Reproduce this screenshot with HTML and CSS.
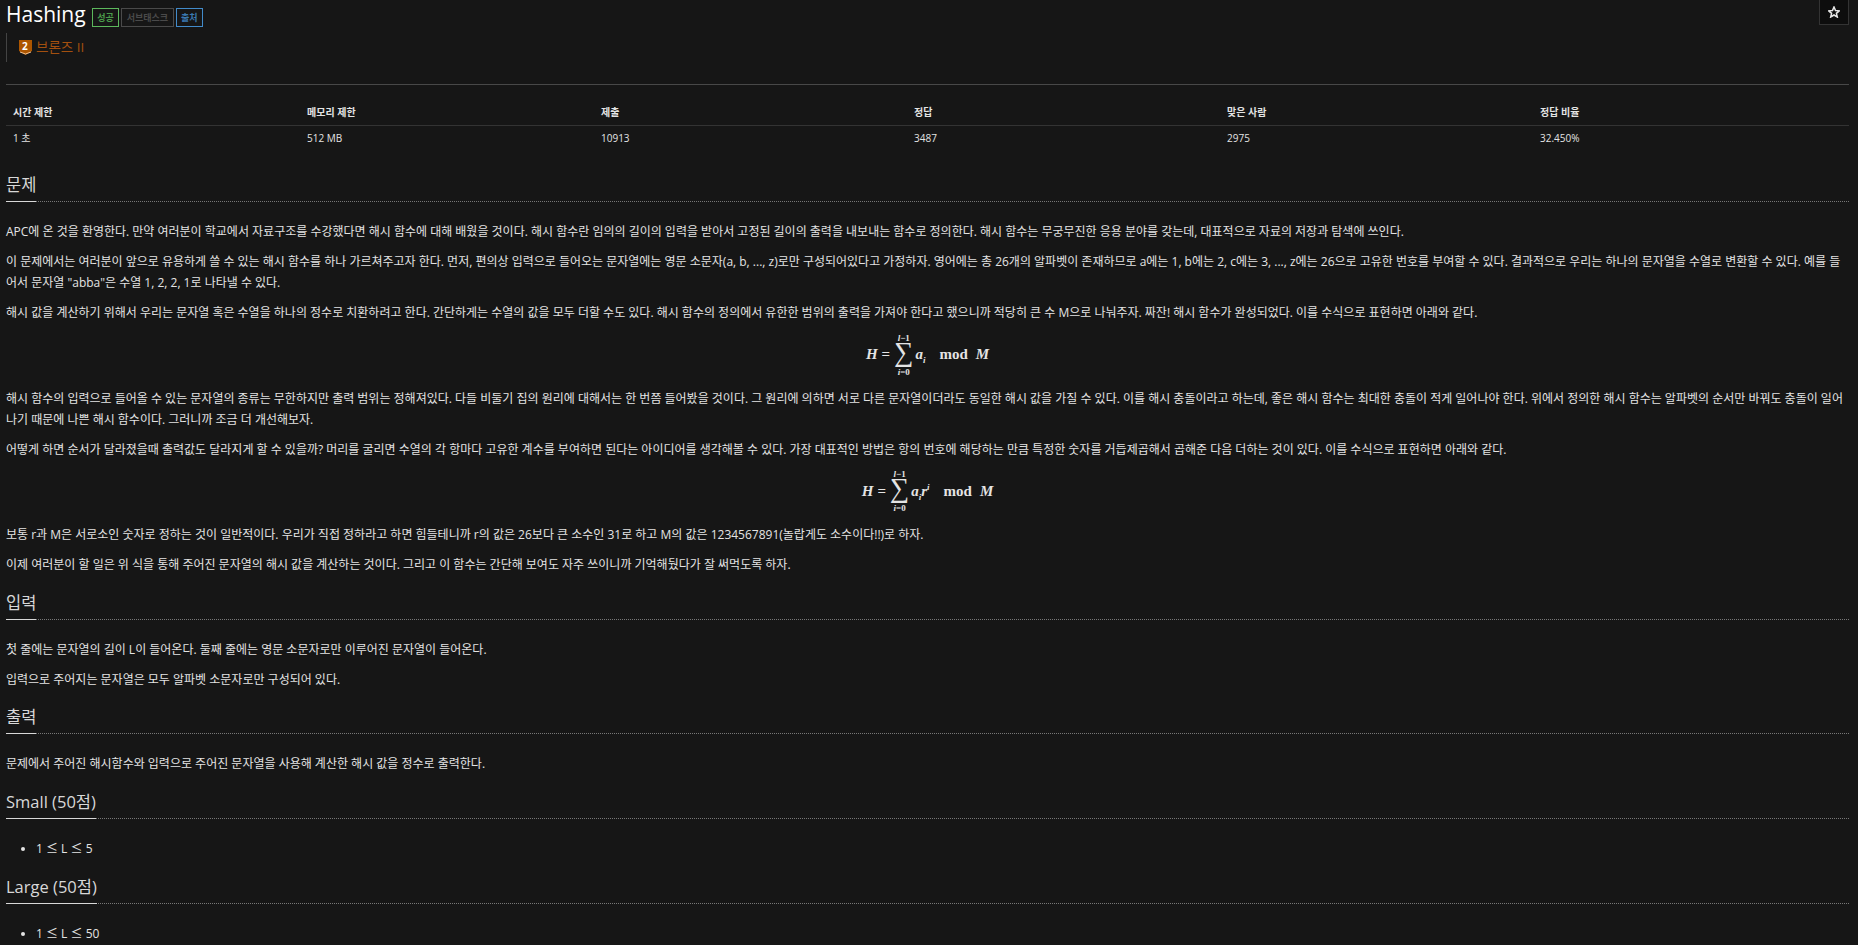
FILE: index.html

```html
<!DOCTYPE html>
<html lang="ko">
<head>
    <meta charset="UTF-8">
    <meta name="viewport" content="width=device-width, initial-scale=1.0">
    <title>Hashing</title>
    <link rel="stylesheet" href="styles.css">
</head>
<body>
<div class="star-btn">
    <svg width="12" height="12" viewBox="0 0 24 24"><path d="M12 2l3 7 7.5.7-5.700 5 1.800 7.300-6.600-4-6.600 4 1.800-7.300-5.700-5L9 9z" fill="none" stroke="#e8e8e8" stroke-width="3"/></svg>
</div>
<div class="page-header">
    <h1>Hashing</h1>
    <span class="label label-green">성공</span>
    <span class="label label-gray">서브태스크</span>
    <span class="label label-blue">출처</span>
</div>
<div class="tier">
    <svg class="tier-icon" width="13" height="15" viewBox="0 0 13 15"><path d="M0 0h13v11l-6.500 4-6.500-4z" fill="#ad5600"/><path d="M1 12l5.500 2 5.500-2" fill="none" stroke="#f0c090" stroke-width="1"/></svg>
    <span class="tier-num">2</span>
    <span class="tier-name">브론즈 II</span>
</div>
<hr class="top-line">

<table class="info">
    <thead>
        <tr>
            <th class="w1">시간 제한</th>
            <th class="w1">메모리 제한</th>
            <th class="w2">제출</th>
            <th class="w2">정답</th>
            <th class="w2">맞은 사람</th>
            <th>정답 비율</th>
        </tr>
    </thead>
    <tbody>
        <tr>
            <td>1 초</td>
            <td>512 MB</td>
            <td>10913</td>
            <td>3487</td>
            <td>2975</td>
            <td>32.450%</td>
        </tr>
    </tbody>
</table>

<section class="first">
    <div class="headline"><h2>문제</h2></div>
    <p>APC에 온 것을 환영한다. 만약 여러분이 학교에서 자료구조를 수강했다면 해시 함수에 대해 배웠을 것이다. 해시 함수란 임의의 길이의 입력을 받아서 고정된 길이의 출력을 내보내는 함수로 정의한다. 해시 함수는 무궁무진한 응용 분야를 갖는데, 대표적으로 자료의 저장과 탐색에 쓰인다.</p>
    <p>이 문제에서는 여러분이 앞으로 유용하게 쓸 수 있는 해시 함수를 하나 가르쳐주고자 한다. 먼저, 편의상 입력으로 들어오는 문자열에는 영문 소문자(a, b, ..., z)로만 구성되어있다고 가정하자. 영어에는 총 26개의 알파벳이 존재하므로 a에는 1, b에는 2, c에는 3, ..., z에는 26으로 고유한 번호를 부여할 수 있다. 결과적으로 우리는 하나의 문자열을 수열로 변환할 수 있다. 예를 들어서 문자열 "abba"은 수열 1, 2, 2, 1로 나타낼 수 있다.</p>
    <p>해시 값을 계산하기 위해서 우리는 문자열 혹은 수열을 하나의 정수로 치환하려고 한다. 간단하게는 수열의 값을 모두 더할 수도 있다. 해시 함수의 정의에서 유한한 범위의 출력을 가져야 한다고 했으니까 적당히 큰 수 M으로 나눠주자. 짜잔! 해시 함수가 완성되었다. 이를 수식으로 표현하면 아래와 같다.</p>
    <div class="math">
        <i>H</i><span class="eq">=</span>
        <span class="sum"><small><i>l</i>−1</small><span class="sigma">∑</span><small><i>i</i>=0</small></span>
        <span class="term"><i>a</i><sub><i>i</i></sub></span>
        <span class="mod">mod</span><i>M</i>
    </div>
    <p>해시 함수의 입력으로 들어올 수 있는 문자열의 종류는 무한하지만 출력 범위는 정해져있다. 다들 비둘기 집의 원리에 대해서는 한 번쯤 들어봤을 것이다. 그 원리에 의하면 서로 다른 문자열이더라도 동일한 해시 값을 가질 수 있다. 이를 해시 충돌이라고 하는데, 좋은 해시 함수는 최대한 충돌이 적게 일어나야 한다. 위에서 정의한 해시 함수는 알파벳의 순서만 바꿔도 충돌이 일어나기 때문에 나쁜 해시 함수이다. 그러니까 조금 더 개선해보자.</p>
    <p>어떻게 하면 순서가 달라졌을때 출력값도 달라지게 할 수 있을까? 머리를 굴리면 수열의 각 항마다 고유한 계수를 부여하면 된다는 아이디어를 생각해볼 수 있다. 가장 대표적인 방법은 항의 번호에 해당하는 만큼 특정한 숫자를 거듭제곱해서 곱해준 다음 더하는 것이 있다. 이를 수식으로 표현하면 아래와 같다.</p>
    <div class="math">
        <i>H</i><span class="eq">=</span>
        <span class="sum"><small><i>l</i>−1</small><span class="sigma">∑</span><small><i>i</i>=0</small></span>
        <span class="term"><i>a</i><sub><i>i</i></sub><i>r</i><sup><i>i</i></sup></span>
        <span class="mod">mod</span><i>M</i>
    </div>
    <p>보통 r과 M은 서로소인 숫자로 정하는 것이 일반적이다. 우리가 직접 정하라고 하면 힘들테니까 r의 값은 26보다 큰 소수인 31로 하고 M의 값은 1234567891(놀랍게도 소수이다!!)로 하자.</p>
    <p>이제 여러분이 할 일은 위 식을 통해 주어진 문자열의 해시 값을 계산하는 것이다. 그리고 이 함수는 간단해 보여도 자주 쓰이니까 기억해뒀다가 잘 써먹도록 하자.</p>
</section>

<section class="wide-gap">
    <div class="headline"><h2>입력</h2></div>
    <p>첫 줄에는 문자열의 길이 L이 들어온다. 둘째 줄에는 영문 소문자로만 이루어진 문자열이 들어온다.</p>
    <p>입력으로 주어지는 문자열은 모두 알파벳 소문자로만 구성되어 있다.</p>
</section>

<section>
    <div class="headline"><h2>출력</h2></div>
    <p>문제에서 주어진 해시함수와 입력으로 주어진 문자열을 사용해 계산한 해시 값을 정수로 출력한다.</p>
</section>

<section class="wide-gap">
    <div class="headline"><h2>Small (50점)</h2></div>
    <ul><li>1 <span class="le">≤</span> L <span class="le">≤</span> 5</li></ul>
</section>

<section class="wide-gap">
    <div class="headline"><h2>Large (50점)</h2></div>
    <ul><li>1 <span class="le">≤</span> L <span class="le">≤</span> 50</li></ul>
</section>
</body>
</html>
```

FILE: styles.css

```css
html { overflow: hidden; }
body { font-family: "Open Sans", "Noto Sans CJK KR", sans-serif; font-size: 13px; line-height: 21px; background-color: #161616; color: #e4e4e4; margin: 0; padding: 0 9px 0 6px; height: 945px; overflow: hidden; }

.star-btn { float: right; width: 28px; height: 24px; background: #0d0d0d; border: 1px solid #333; border-top: none; display: flex; align-items: center; justify-content: center; }

.page-header { display: flex; align-items: center; height: 27px; padding-top: 1px; }
h1 { margin: 0 6px 0 0; font-size: 21px; font-weight: 400; line-height: 27px; color: #fff; }
.label { font-size: 9px; line-height: 17px; height: 17px; padding: 0 4.500px; margin-right: 2px; border: 1px solid; margin-top: 6px; font-weight: 700; }
.label-green { border-color: #5cb85c; color: #4a9a4a; }
.label-gray { border-color: #4a4a4a; color: #4a4a4a; }
.label-blue { border-color: #428bca; color: #3a78b0; }

.tier { position: relative; display: flex; align-items: center; height: 29px; margin-top: 5px; padding-left: 12px; border-left: 1px solid #444; padding-bottom: 1px; box-sizing: border-box; }
.tier-icon { margin-right: 4px; }
.tier-num { position: absolute; left: 15px; top: 7px; font-size: 10px; line-height: 13px; font-weight: 700; color: #fff; }
.tier-name { font-size: 13.500px; color: #a3500f; }

.top-line { border: 0; border-top: 1px solid #484848; margin: 22px 0 0; }

.info { width: 100%; border-collapse: collapse; margin-top: 15px; font-size: 10px; table-layout: fixed; }
.info th { text-align: left; font-weight: 700; padding: 0 7px; height: 25px; border-bottom: 1px solid #333; }
.info td { padding: 0 7px; height: 25px; }
.w1 { width: 280px; }
.w2 { width: 299px; }

section { margin-top: 13px; }
section.first { margin-top: 20px; }
section.wide-gap { margin-top: 14px; }
.headline { border-bottom: 1px dotted #777; height: 30px; }
h2 { display: inline-block; margin: 0; height: 30px; font-size: 16.500px; line-height: 28px; font-weight: 400; color: #d8d8d8; border-bottom: 1px solid #d8d8d8; }

p { margin: 0 0 9px; font-size: 12px; line-height: 21px; word-break: break-all; }
.headline + p { margin-top: 19px; }

.math { display: flex; align-items: center; justify-content: center; height: 48px; margin: -1.500px 0 9px; font-family: "Liberation Serif", serif; font-size: 15px; font-weight: 700; color: #e4e4e4; }
.eq { margin: 0 4px; }
.sum { display: inline-flex; flex-direction: column; align-items: center; margin-right: 2px; }
.sum small { font-size: 9px; line-height: 10px; }
.sigma { font-size: 27px; line-height: 24px; font-weight: 400; margin: -3px 0 3px; }
.term sub, .term sup { font-size: 9px; line-height: 8px; }
.mod { margin: 0 8px 0 14px; }

ul { margin: 18px 0 0; padding-left: 30px; font-size: 12px; }
.le { font-family: "Noto Sans CJK KR", sans-serif; }
```
